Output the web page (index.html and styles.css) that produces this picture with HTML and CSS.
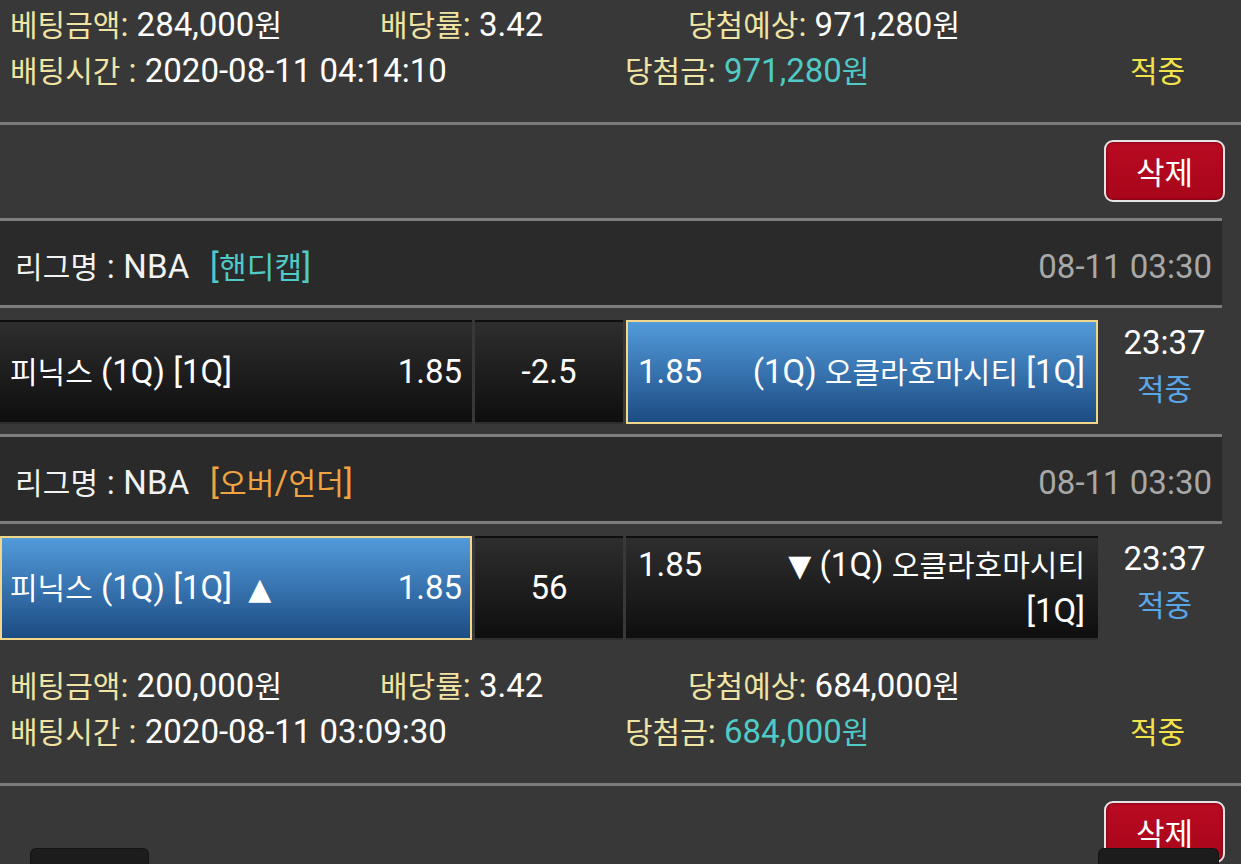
FILE: index.html
```html
<!DOCTYPE html>
<html lang="ko">
<head>
<meta charset="utf-8">
<title>배팅내역</title>
<link rel="stylesheet" href="styles.css">
</head>
<body>
<main class="bet-list">
  <section class="bet-summary first">
    <div class="sum-row sum-row-top">
      <div class="field"><span class="lbl"><span class="k">베팅금액</span>:</span> 284,000<span class="k">원</span></div>
      <div class="field"><span class="lbl"><span class="k">배당률</span>:</span> 3.42</div>
      <div class="field"><span class="lbl"><span class="k">당첨예상</span>:</span> 971,280<span class="k">원</span></div>
    </div>
    <div class="sum-row sum-row-bottom">
      <div class="field"><span class="lbl"><span class="k">배팅시간</span> :</span> 2020-08-11 04:14:10</div>
      <div class="field"><span class="lbl"><span class="k">당첨금</span>:</span> <span class="win">971,280<span class="k">원</span></span></div>
      <div class="field result"><span class="k">적중</span></div>
    </div>
  </section>
  <div class="actions"><button class="btn-del"><span class="k">삭제</span></button></div>

  <section class="game-list">
    <div class="league">
      <div class="league-name"><span class="k">리그명</span> : NBA <span class="tag tag-hc">[<span class="k">핸디캡</span>]</span></div>
      <div class="league-date">08-11 03:30</div>
    </div>
    <div class="match">
      <div class="cell home"><div class="cell-in"><span class="odds">1.85</span><span class="team"><span class="k">피닉스</span> (1Q) [1Q]</span></div></div>
      <div class="cell mid">-2.5</div>
      <div class="cell away picked"><div class="cell-in"><span class="odds">1.85</span><span class="team">(1Q) <span class="k">오클라호마시티</span> [1Q]</span></div></div>
      <div class="status"><div class="time">23:37</div><div class="hit"><span class="k">적중</span></div></div>
    </div>
    <div class="league">
      <div class="league-name"><span class="k">리그명</span> : NBA <span class="tag tag-ou">[<span class="k">오버</span>/<span class="k">언더</span>]</span></div>
      <div class="league-date">08-11 03:30</div>
    </div>
    <div class="match">
      <div class="cell home picked"><div class="cell-in"><span class="odds">1.85</span><span class="team"><span class="k">피닉스</span> (1Q) [1Q] <span class="arrow arrow-up">▲</span></span></div></div>
      <div class="cell mid">56</div>
      <div class="cell away"><div class="cell-in"><span class="odds">1.85</span><span class="team"><span class="arrow">▼</span> (1Q) <span class="k">오클라호마시티</span> [1Q]</span></div></div>
      <div class="status"><div class="time">23:37</div><div class="hit"><span class="k">적중</span></div></div>
    </div>
  </section>

  <section class="bet-summary">
    <div class="sum-row sum-row-top">
      <div class="field"><span class="lbl"><span class="k">베팅금액</span>:</span> 200,000<span class="k">원</span></div>
      <div class="field"><span class="lbl"><span class="k">배당률</span>:</span> 3.42</div>
      <div class="field"><span class="lbl"><span class="k">당첨예상</span>:</span> 684,000<span class="k">원</span></div>
    </div>
    <div class="sum-row sum-row-bottom">
      <div class="field"><span class="lbl"><span class="k">배팅시간</span> :</span> 2020-08-11 03:09:30</div>
      <div class="field"><span class="lbl"><span class="k">당첨금</span>:</span> <span class="win">684,000<span class="k">원</span></span></div>
      <div class="field result"><span class="k">적중</span></div>
    </div>
  </section>
  <div class="actions"><button class="btn-del"><span class="k">삭제</span></button></div>
</main>

<nav class="dock">
  <div class="dock-btn dock-left"></div>
  <div class="dock-btn dock-right"></div>
</nav>
</body>
</html>
```

FILE: styles.css
```css
* {
  box-sizing: border-box;
}

html, body {
  margin: 0;
  padding: 0;
}

body {
  background: #383838;
  color: #ffffff;
  font-family: Roboto, "Noto Sans CJK KR", sans-serif;
  font-size: 33px;
  line-height: 46px;
  overflow: hidden;
  height: 864px;
}

.k {
  font-family: "Noto Sans CJK KR", sans-serif;
  font-size: 30px;
  line-height: 1;
}

.bet-list {
  display: flex;
  flex-direction: column;
}

/* ---- summary ---- */
.bet-summary {
  padding: 13px 0 28px 10px;
  border-bottom: 3px solid #7b7b7b;
}

.bet-summary.first {
  margin-top: -11px;
}

.sum-row {
  display: grid;
  white-space: nowrap;
  height: 46px;
}

.sum-row-top {
  grid-template-columns: 370px 308px auto;
}

.sum-row-bottom {
  grid-template-columns: 615px 505px auto;
}

.lbl {
  color: #efe4a4;
}

.win {
  color: #4fcac6;
}

.result {
  color: #f3e24a;
}

/* ---- actions ---- */
.actions {
  display: flex;
  justify-content: flex-end;
  padding: 15px 16px 16px;
}

.btn-del {
  width: 121px;
  height: 62px;
  background: linear-gradient(#b90a22, #a8061a);
  border: 2px solid #e4e4e4;
  border-radius: 9px;
  color: #ffffff;
  padding: 0;
  line-height: 1;
  box-shadow: inset 0 0 3px rgba(0, 0, 0, 0.5);
}

.btn-del .k {
  font-size: 31px;
}

/* ---- games ---- */
.game-list {
  width: 1222px;
  display: flex;
  flex-direction: column;
}

.league {
  display: flex;
  justify-content: space-between;
  align-items: center;
  height: 90px;
  padding: 7px 10px 0 15px;
  background: #2a2a2a;
  border-top: 3px solid #7d7d7d;
  border-bottom: 3px solid #7d7d7d;
  color: #f2f2f2;
  white-space: nowrap;
}

.league-name {
  letter-spacing: 0.2px;
}

.tag {
  margin-left: 12px;
}

.tag-hc {
  color: #4fcac6;
}

.tag-ou {
  color: #f0a340;
}

.league-date {
  color: #a8a8a8;
}

.match {
  display: grid;
  grid-template-columns: 472px 148px 472px 1fr;
  column-gap: 3px;
  padding: 12px 0 10px;
}

.cell {
  height: 104px;
  display: flex;
  align-items: center;
  background: linear-gradient(#2e2e2e, #0e0e0e);
  border: 2px solid transparent;
}

.cell-in {
  flex: 1;
}

.cell.picked {
  background: linear-gradient(#529ada, #1c4c83);
  border-color: #f2d68a;
}

.home {
  padding: 0 8px;
}

.home .odds {
  float: right;
}

.home .team {
  white-space: nowrap;
}

.mid {
  justify-content: center;
}

.away {
  padding: 0 11px 0 10px;
}

.away .odds {
  float: left;
  margin-right: 20px;
}

.away .team {
  display: block;
  text-align: right;
}

.arrow {
  font-family: "DejaVu Sans", sans-serif;
  font-size: 30px;
  line-height: 1;
}

.arrow-up {
  margin-left: 8px;
}

.status {
  text-align: center;
  padding-left: 6px;
}

.hit {
  color: #5aa6e6;
}

/* ---- bottom dock (fixed overlay) ---- */
.dock {
  position: fixed;
  left: 0;
  right: 0;
  bottom: 0;
  height: 16px;
  display: flex;
  justify-content: space-between;
  padding: 0 22px 0 30px;
}

.dock-btn {
  width: 119px;
  height: 16px;
  background: #1c1c1c;
  border: 1px solid #141414;
  border-bottom: none;
  border-radius: 6px 6px 0 0;
}

.dock-right {
  width: 121px;
}
```
